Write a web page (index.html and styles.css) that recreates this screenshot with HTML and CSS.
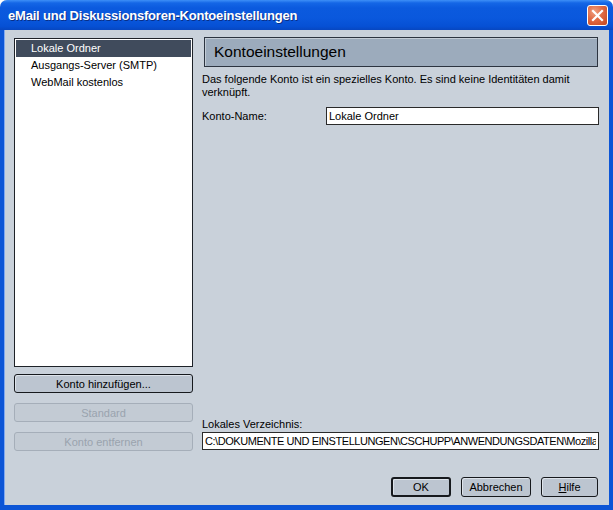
FILE: index.html
```html
<!DOCTYPE html>
<html lang="de">
<head>
    <meta charset="UTF-8">
    <title>eMail und Diskussionsforen-Kontoeinstellungen</title>
    <link rel="stylesheet" href="styles.css">
</head>
<body>
    <div class="window">
        <div class="titlebar">
            <span class="title">eMail und Diskussionsforen-Kontoeinstellungen</span>
            <button class="close-btn" title="Schließen">
                <svg width="13" height="13" viewBox="0 0 13 13">
                    <path d="M2 2 L11 11 M11 2 L2 11" stroke="#fff" stroke-width="2.2" stroke-linecap="square"/>
                </svg>
            </button>
        </div>

        <div class="content">
            <div class="left-col">
                <ul class="account-list">
                    <li class="selected">Lokale Ordner</li>
                    <li>Ausgangs-Server (SMTP)</li>
                    <li>WebMail kostenlos</li>
                </ul>
                <button class="btn wide">Konto hinzufügen...</button>
                <button class="btn wide" disabled>Standard</button>
                <button class="btn wide" disabled>Konto entfernen</button>
            </div>

            <div class="right-col">
                <div class="panel-header">Kontoeinstellungen</div>
                <p class="desc">Das folgende Konto ist ein spezielles Konto. Es sind keine Identitäten damit verknüpft.</p>
                <div class="field-row">
                    <label for="accName">Konto-Name:</label>
                    <input id="accName" type="text" value="Lokale Ordner">
                </div>

                <div class="dir-section">
                    <label for="localDir">Lokales Verzeichnis:</label>
                    <input id="localDir" type="text" value="C:\DOKUMENTE UND EINSTELLUNGEN\CSCHUPP\ANWENDUNGSDATEN\Mozilla\Profiles\default\Mail\Local Folders">
                </div>
            </div>
        </div>

        <div class="footer">
            <button class="btn default">OK</button>
            <button class="btn">Abbrechen</button>
            <button class="btn"><u>H</u>ilfe</button>
        </div>
    </div>
</body>
</html>
```

FILE: styles.css
```css
html, body {
    margin: 0;
    padding: 0;
    background: #fff;
}
* {
    box-sizing: border-box;
}
.window {
    width: 613px;
    height: 510px;
    display: flex;
    flex-direction: column;
    background-color: #c9d1da;
    border-radius: 7px 7px 0 0;
    overflow: hidden;
    font-family: "Liberation Sans", "DejaVu Sans", sans-serif;
    font-size: 11px;
    color: #000;
}
.titlebar {
    height: 30px;
    flex: none;
    display: flex;
    align-items: center;
    justify-content: space-between;
    padding: 0 5px 0 8px;
    background: linear-gradient(#3d8ff7 0, #1466e6 3px, #0b5ade 8px, #0a58dd 60%, #0650d4 88%, #0747c0 100%);
}
.title {
    color: #fff;
    font-size: 13px;
    font-weight: bold;
    letter-spacing: -0.2px;
    text-shadow: 1px 1px 0 #0a2f86;
}
.close-btn {
    width: 21px;
    height: 21px;
    padding: 0;
    border: 1px solid #fff;
    border-radius: 3px;
    background: radial-gradient(circle at 35% 30%, #f0a080 0, #e06a44 45%, #c4461e 100%);
    display: flex;
    align-items: center;
    justify-content: center;
}
.content {
    flex: 1;
    display: flex;
    gap: 10px;
    padding: 7px 14px 0 14px;
    border-left: 4px solid #0c55d6;
    border-right: 4px solid #0c55d6;
}
.content, .footer {
    box-shadow: inset 1px 0 0 #7fa8f0;
}
.left-col {
    width: 179px;
    display: flex;
    flex-direction: column;
    gap: 10px;
    margin-left: -4px;
    padding-top: 1px;
}
.account-list {
    list-style: none;
    margin: 0 0 -3px 0;
    padding: 1px;
    height: 329px;
    background: #fff;
    border: 1px solid #1e2228;
}
.account-list li {
    height: 17px;
    line-height: 17px;
    padding-left: 15px;
}
.account-list li.selected {
    background-color: #404b5c;
    color: #fff;
}
.btn {
    font-family: inherit;
    font-size: 11px;
    height: 19px;
    padding: 0;
    background-color: #bcc5d0;
    color: #000;
    border: 1px solid #16191d;
    border-radius: 3px;
    box-shadow: inset 1px 1px 0 #dde3ea;
}
.btn.wide {
    width: 179px;
}
.btn:disabled {
    color: #9aa3ae;
    background-color: #c3cbd4;
    border-color: #a5aeb9;
    box-shadow: none;
}
.right-col {
    flex: 1;
    display: flex;
    flex-direction: column;
    margin-left: -1px;
    margin-right: -4px;
}
.panel-header {
    height: 30px;
    margin-left: 2px;
    margin-right: 1px;
    padding-left: 9px;
    line-height: 28px;
    font-size: 15.5px;
    background-color: #9cabbc;
    border: 1px solid #2c3440;
    box-shadow: inset 1px 1px 0 #c3ccd6;
}
.desc {
    margin: 6px 0 0 0;
    line-height: 13px;
}
.field-row {
    display: flex;
    align-items: center;
    margin-top: 8px;
}
.field-row label {
    width: 124px;
}
input {
    font-family: inherit;
    font-size: 11px;
    height: 18px;
    padding: 0 2px;
    border: 1px solid #2a2a2a;
    background: #fff;
    color: #000;
    outline: none;
}
.field-row input {
    flex: 1;
}
.dir-section {
    margin-top: auto;
    display: flex;
    flex-direction: column;
    gap: 2px;
    padding-bottom: 1px;
}
.dir-section input {
    width: 100%;
    height: 18px;
    letter-spacing: -0.45px;
}
.footer {
    flex: none;
    height: 59px;
    display: flex;
    justify-content: flex-end;
    align-items: flex-start;
    gap: 10px;
    padding: 26px 11px 0 0;
    border-left: 4px solid #0c55d6;
    border-right: 4px solid #0c55d6;
    border-bottom: 5px solid #0c55d6;
}
.footer .btn {
    height: 20px;
    width: 70px;
}
.footer .btn.default {
    width: 60px;
    border-width: 2px;
}
.footer .btn:last-child {
    width: 57px;
}
```
